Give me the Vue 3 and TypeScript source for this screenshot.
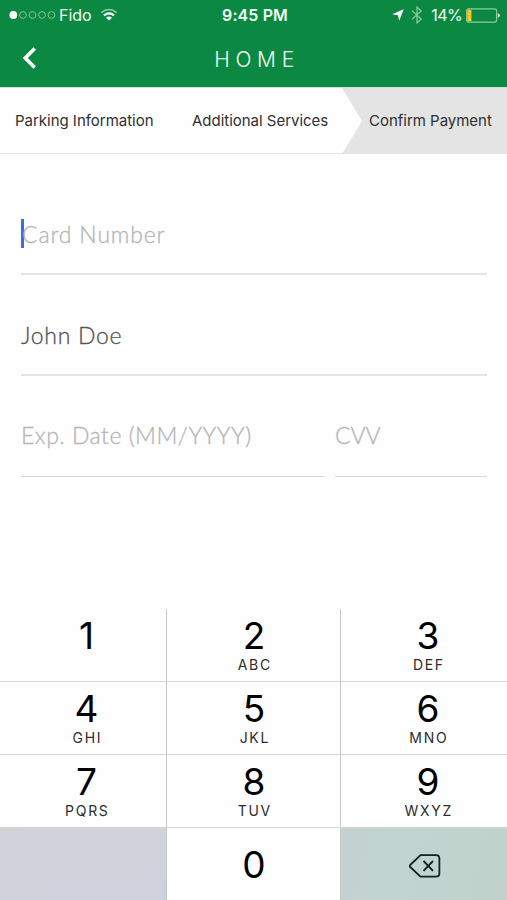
<script setup lang="ts">
interface Key {
  digit: string
  letters?: string
}

const steps: { label: string; name: string }[] = [
  { label: 'Parking Information', name: 'parking' },
  { label: 'Additional Services', name: 'services' },
  { label: 'Confirm Payment', name: 'confirm' },
]

const keys: Key[] = [
  { digit: '1' },
  { digit: '2', letters: 'ABC' },
  { digit: '3', letters: 'DEF' },
  { digit: '4', letters: 'GHI' },
  { digit: '5', letters: 'JKL' },
  { digit: '6', letters: 'MNO' },
  { digit: '7', letters: 'PQRS' },
  { digit: '8', letters: 'TUV' },
  { digit: '9', letters: 'WXYZ' },
]
</script>

<template>
  <div class="screen">
    <header class="header">
      <div class="status">
        <div class="status-left">
          <svg class="signal" width="47" height="10" viewBox="0 0 47 10">
            <circle cx="4.3" cy="5" r="3.9" fill="#fff" />
            <g fill="none" stroke="#7fc596" stroke-width="1">
              <circle cx="14" cy="5" r="3.4" />
              <circle cx="23.5" cy="5" r="3.4" />
              <circle cx="33" cy="5" r="3.4" />
              <circle cx="42.5" cy="5" r="3.4" />
            </g>
          </svg>
          <span class="carrier">Fido</span>
          <svg class="wifi" width="18" height="14" viewBox="0 0 18 14">
            <g fill="none">
              <path d="M1.3 4.6 Q9 -1.6 16.7 4.6" stroke="#8bcba0" stroke-width="1.6" />
              <path d="M3.9 7.5 Q9 3.1 14.1 7.5" stroke="#fff" stroke-width="2.1" />
            </g>
            <path d="M6 9.7 Q9 7.3 12 9.7 L9 12.6 Z" fill="#fff" />
          </svg>
        </div>
        <span class="clock">9:45 PM</span>
        <div class="status-right">
          <svg class="location" width="12" height="12" viewBox="0 0 12 12">
            <path d="M11.8 0.3 L7.2 11.8 L6 6.3 L0.2 5.3 Z" fill="#fff" />
          </svg>
          <svg class="bluetooth" width="12" height="18" viewBox="0 0 12 18">
            <path d="M1 4.8 L10.2 12.9 L6 17 V1 L10.2 5 L1 13.2" fill="none" stroke="#83c698" stroke-width="1.3" />
          </svg>
          <span class="percent">14%</span>
          <svg class="battery" width="34" height="15" viewBox="0 0 34 15">
            <rect x="0.6" y="0.9" width="30" height="13.2" rx="2" fill="none" stroke="#8ccc9e" stroke-width="1.1" />
            <path d="M2 1.7 H5.4 V13.3 H2 Q1.3 13.3 1.3 12.5 V2.5 Q1.3 1.7 2 1.7Z" fill="#ffca17" />
            <path d="M31.7 5.2 Q33.8 5.8 33.8 7.5 Q33.8 9.2 31.7 9.8Z" fill="#d9f0df" />
          </svg>
        </div>
      </div>
      <div class="nav">
        <svg class="back" width="15" height="22" viewBox="0 0 15 22">
          <path d="M12.7 1.4 L3.3 11 L12.7 20.6" fill="none" stroke="#fff" stroke-width="3.6" />
        </svg>
        <h1 class="title">HOME</h1>
      </div>
    </header>

    <nav class="steps">
      <div v-for="step in steps" :key="step.name" class="step" :class="step.name">
        <span>{{ step.label }}</span>
      </div>
    </nav>

    <main class="form">
      <div class="field placeholder">
        <i class="caret"></i><span class="card-label">Card Number</span>
      </div>
      <div class="field"><span class="name-value">John Doe</span></div>
      <div class="split">
        <div class="field placeholder"><span class="exp-label">Exp. Date (MM/YYYY)</span></div>
        <div class="field placeholder"><span class="cvv-label">CVV</span></div>
      </div>
    </main>

    <section class="keypad">
      <div v-for="key in keys" :key="key.digit" class="key">
        <span class="digit">{{ key.digit }}</span>
        <span v-if="key.letters" class="letters">{{ key.letters }}</span>
      </div>
      <div class="key blank"></div>
      <div class="key zero"><span class="digit">0</span></div>
      <div class="key delete">
        <svg width="32" height="24" viewBox="0 0 32 24">
          <g fill="none" stroke="#14211e" stroke-linejoin="round">
            <path d="M11.5 1.2 H27 Q30.4 1.2 30.4 4.6 V19.2 Q30.4 22.6 27 22.6 H11.5 L1.2 13 Q0.4 12 1.2 11 Z" stroke-width="1.8" />
            <path d="M14.5 7 L24 16.8 M24 7 L14.5 16.8" stroke-width="1.8" />
          </g>
        </svg>
      </div>
    </section>
  </div>
</template>

<style>
body {
  margin: 0;
  background: #fff;
}
</style>

<style scoped>
.screen {
  width: 507px;
  height: 900px;
  display: flex;
  flex-direction: column;
  overflow: hidden;
  background: #fefefe;
  font-family: Inter, "Liberation Sans", sans-serif;
  white-space: nowrap;
}

.header {
  height: 87px;
  flex: none;
  background: #0b8942;
  color: #f1fff4;
}

.status {
  height: 30px;
  display: grid;
  grid-template-columns: 1fr auto 1fr;
  align-items: center;
  padding: 0 7px 0 9px;
  font-size: 16px;
  line-height: 30px;
}

.status-left,
.status-right {
  display: flex;
  align-items: center;
}

.status-right {
  justify-content: flex-end;
}

.carrier {
  margin-left: 3px;
}

.wifi {
  margin-left: 8px;
}

.clock {
  font-weight: 600;
  font-size: 16px;
  letter-spacing: 0.1px;
  padding-left: 1px;
}

.bluetooth {
  margin-left: 7px;
}

.percent {
  margin-left: 8px;
  letter-spacing: -0.6px;
}

.battery {
  margin-left: 4px;
}

.nav {
  height: 56px;
  display: grid;
  grid-template-columns: 60px 1fr 60px;
  align-items: center;
}

.back {
  margin: -3px 0 0 22px;
}

.title {
  margin: 0;
  padding: 2px 0 0 7px;
  text-align: center;
  font-family: Inter, sans-serif;
  font-weight: 300;
  font-size: 21px;
  line-height: 56px;
  letter-spacing: 5.7px;
}

.steps {
  height: 67px;
  flex: none;
  display: grid;
  grid-template-columns: 169px 173px 165px;
  box-sizing: border-box;
  border-top: 1px solid #c8e6d2;
  font-size: 15px;
  line-height: 65px;
  color: #303030;
}

.step {
  box-sizing: border-box;
  border-bottom: 1px solid #e4e4e4;
  letter-spacing: -0.02px;
}

.parking {
  padding-left: 15px;
}

.services {
  padding-left: 23px;
}

.confirm {
  padding-left: 27px;
  background: #e4e4e4;
  clip-path: polygon(0 0, 100% 0, 100% 100%, 0 100%, 20px 50%);
}

.form {
  flex: 1;
  padding: 41px 20px 0 21px;
  font-family: Lato, sans-serif;
  font-size: 23px;
  font-weight: 300;
  -webkit-text-stroke-width: 0.3px;
  color: #555;
}

.field {
  height: 80px;
  box-sizing: border-box;
  display: flex;
  align-items: center;
  padding-bottom: 1px;
  border-bottom: 2px solid #e4e4e4;
  margin-bottom: 21px;
}

.placeholder {
  color: #b5b5b5;
}

.split .field {
  padding-bottom: 3px;
  border-bottom: 1px solid #d8d8d8;
}

.caret {
  width: 3px;
  height: 29px;
  margin-right: -2px;
  background: #3f6be0;
}

.card-label {
  letter-spacing: 0.85px;
}

.name-value {
  letter-spacing: 0.7px;
}

.exp-label {
  letter-spacing: 0.5px;
}

.split {
  display: grid;
  grid-template-columns: 304px 1fr;
  gap: 10px;
}

.keypad {
  height: 291px;
  flex: none;
  display: grid;
  grid-template-columns: 167px 174px 166px;
  grid-template-rows: 73px 73px 73px 72px;
  color: #000;
}

.key {
  box-sizing: border-box;
  display: flex;
  flex-direction: column;
  align-items: center;
  padding: 8px 0 0 7px;
  border-right: 1px solid #c6c6c6;
  border-bottom: 1px solid #d5d5d5;
}

.key:nth-child(3n + 2) {
  padding-left: 1px;
}

.key:nth-child(3n) {
  padding-left: 8px;
  border-right: 0;
}

.key:nth-child(n + 10) {
  border-bottom: 0;
}

.digit {
  font-size: 37px;
  line-height: 37px;
  font-weight: 400;
}

.letters {
  font-size: 14px;
  line-height: 14px;
  letter-spacing: 1.7px;
  margin: 4px -1.7px 0 0;
  color: #2c2c2c;
}

.key.blank {
  background: linear-gradient(170deg, #d0d3d6 0, #d0d3dc 32%, #cfd2dc 100%);
}

.key.zero {
  padding-top: 18px;
}

.key.delete {
  padding: 26px 0 0 2px;
  background: linear-gradient(105deg, #c5d0d2 0, #c1d4d0 28%, #c0d2cb 100%);
}
</style>
